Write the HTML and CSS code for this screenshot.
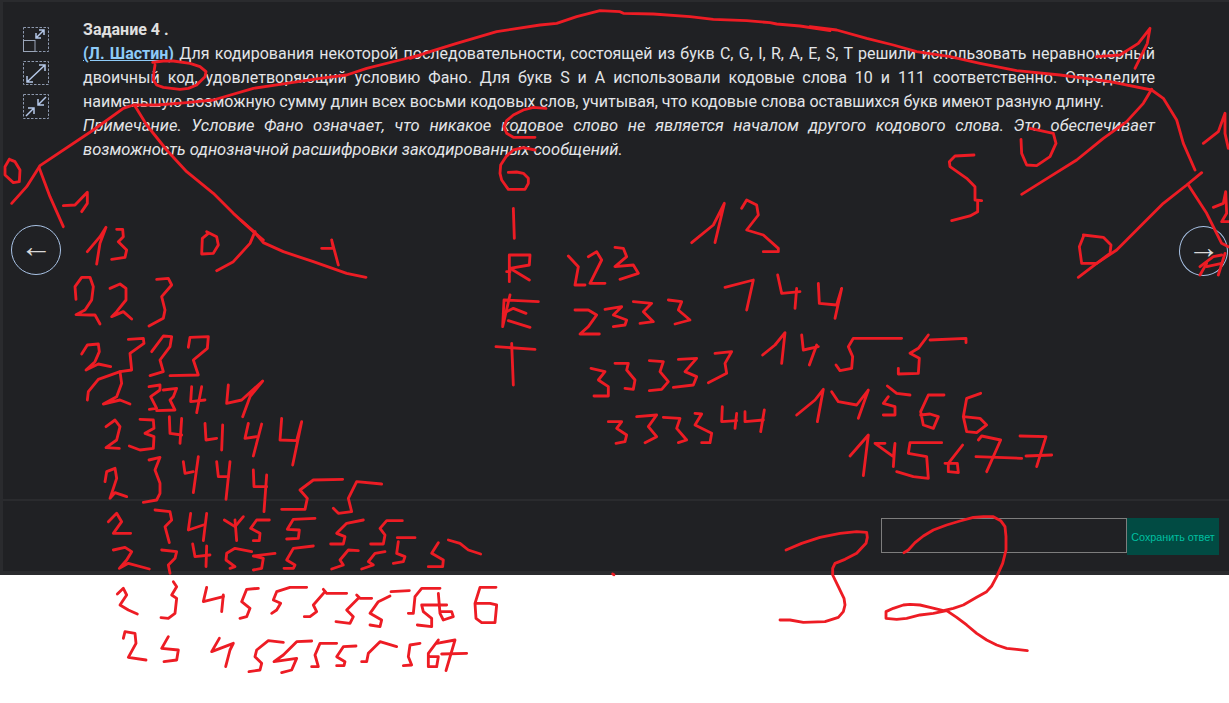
FILE: index.html
```html
<!DOCTYPE html>
<html lang="ru">
<head>
<meta charset="utf-8">
<title>Задание 4</title>
<link rel="stylesheet" href="styles.css">
</head>
<body>
<main class="panel">
  <section class="task">
    <nav class="tools">
      <button class="tool tool-first" aria-label="Свернуть">
        <svg viewBox="0 0 26 25" class="tool-icon"><rect class="dash" x=".5" y=".5" width="25" height="24"/><rect class="solid" x=".5" y="13.5" width="11.5" height="11"/><path class="arrow" d="M13 11 21 3M16 3h5v5M13 6v5h5"/></svg>
      </button>
      <button class="tool" aria-label="Развернуть">
        <svg viewBox="0 0 26 25" class="tool-icon"><rect class="dash" x=".5" y=".5" width="25" height="23"/><path class="arrow" d="M4 21 22 4M16 4h6v6M4 15v6h6"/></svg>
      </button>
      <button class="tool" aria-label="Уменьшить">
        <svg viewBox="0 0 26 25" class="tool-icon"><rect class="dash" x=".5" y=".5" width="25" height="24"/><path class="arrow" d="M3 22 11 14M5 14h6v6M23 3 15 11M15 5v6h6"/></svg>
      </button>
    </nav>
    <article class="text">
      <h1 class="title">Задание 4 .</h1>
      <p class="para"><a class="author" href="#">(Л. Шастин)</a> Для кодирования некоторой последовательности, состоящей из букв C, G, I, R, A, E, S, T решили использовать неравномерный двоичный код, удовлетворяющий условию Фано. Для букв S и A использовали кодовые слова 10 и 111 соответственно. Определите наименьшую возможную сумму длин всех восьми кодовых слов, учитывая, что кодовые слова оставшихся букв имеют разную длину.</p>
      <p class="para note">Примечание. Условие Фано означает, что никакое кодовое слово не является началом другого кодового слова. Это обеспечивает возможность однозначной расшифровки закодированных сообщений.</p>
    </article>
    <button class="nav-btn nav-prev" aria-label="Назад">←</button>
    <button class="nav-btn nav-next" aria-label="Вперёд">→</button>
  </section>
  <footer class="answer">
    <input class="answer-input" type="text" aria-label="Ответ">
    <button class="save">Сохранить ответ</button>
  </footer>
</main>

<svg class="ink" viewBox="0 0 1229 703" aria-hidden="true">
  <g transform="translate(0 0) scale(.33333)">
    <polyline points="1260,165 1200,180 1100,205 1040,225 960,235 860,250 760,265 640,300 560,308 470,315 400,315 370,325 280,390 120,497"/>
    <polyline points="458,187 490,183 520,183 570,190 600,200 618,215 615,230 590,255 565,265 540,268 490,262 470,255 460,240 462,215 465,195"/>
    <polyline points="405,318 440,375 500,450 560,515 640,580 700,640 760,695 790,720"/>
    <polyline points="118,500 80,560 35,610"/>
    <polyline points="118,505 150,590 190,680"/>
    <polyline points="28,478 15,500 15,525 40,548 58,545 60,510 45,485 28,478"/>
    <polyline points="190,617 225,615 262,577 262,610 245,635"/>
  </g>
  <g transform="translate(410 0) scale(.33333)">
    <polyline points="0,175 60,155 140,130 260,95 390,75 440,70 500,50 570,32 630,35 640,40 730,42 840,50 910,58 1010,62 1080,68 1100,72 1170,78 1260,92"/>
    <polyline points="408,325 370,322 340,330 310,345 290,362 282,380 290,400 310,412 375,412"/>
    <polyline points="375,450 340,443 310,450 288,470 272,495 270,520 275,540 295,568 345,568 355,550 355,535 340,520 320,516 295,517"/>
  </g>
  <g transform="translate(810 0) scale(.33333)">
    <polyline points="0,80 80,90 170,115 250,135 320,155 420,170 510,190 620,212 750,225 900,245 1025,270 1060,295 1100,360 1120,430 1155,510"/>
    <polyline points="860,170 930,165 985,130 1020,85 1012,130 975,205"/>
    <polyline points="1025,268 1000,310 950,365 880,415 800,480 720,530 635,583"/>
    <polyline points="660,385 730,400 738,430 720,470 680,497 650,495 635,460 633,418"/>
    <polyline points="492,465 435,468 418,485 420,500 470,535 495,560 495,600 515,602"/>
    <polyline points="503,605 503,635 480,648 425,662"/>
    <polyline points="1175,518 1130,555 1060,610 1000,670 920,750 860,790 805,832"/>
    <polyline points="1135,555 1190,640 1235,730 1255,740"/>
    <polyline points="820,710 808,740 815,790 860,790 900,760 903,735 880,712 820,705"/>
    <polyline points="1180,430 1225,395 1245,340 1245,400 1255,445"/>
    <polyline points="1210,622 1240,610 1247,575 1250,640 1235,665 1257,665"/>
    <polyline points="1170,800 1210,770 1235,765"/>
    <polyline points="1245,760 1225,825"/>
    <polyline points="1170,825 1190,790"/>
    <polyline points="1190,800 1235,790"/>
  </g>
  <g transform="translate(0 220) scale(.33333)">
    <polyline points="262,95 300,50 318,22 300,70 290,132"/>
    <polyline points="350,28 368,28 370,50 355,65 380,90 375,112 335,118"/>
    <polyline points="620,35 650,50 655,75 640,100 605,102 607,55 625,40"/>
    <polyline points="765,35 750,70 700,125 650,152"/>
    <polyline points="722,0 765,38 790,68 850,95 940,125 1040,160 1098,172"/>
    <polyline points="965,85 1000,85 995,60 1015,135"/>
    <polyline points="228,238 225,200 245,172 270,172 280,200 275,240 255,270 228,284 270,285 285,285 300,312"/>
    <polyline points="330,205 360,192 378,205 378,240 350,275 335,290 370,275 395,297"/>
    <polyline points="470,178 505,175 515,195 485,230 495,270 490,295 447,318"/>
    <polyline points="245,402 262,375 295,372 298,395 285,425 258,450 295,432 332,440"/>
    <polyline points="385,358 430,355 432,370 390,400 395,450 360,455"/>
    <polyline points="455,395 490,348 515,350 510,380 480,420 490,455 450,467"/>
    <polyline points="565,382 570,352 625,350 622,385 580,420 595,465 510,467"/>
    <polyline points="262,540 265,515 295,478 360,455 365,490 350,530 310,552 360,540 390,552"/>
    <polyline points="447,500 480,495 480,510 452,530 470,565 448,568"/>
    <polyline points="490,510 530,505 520,530 510,540 525,570 470,572"/>
    <polyline points="575,500 572,545 615,540"/>
    <polyline points="605,500 590,578"/>
    <polyline points="685,495 680,550 725,540 788,483 750,530 728,590"/>
    <polyline points="318,620 345,600 360,620 350,660 318,683 358,685"/>
    <polyline points="420,598 460,600 462,625 435,640 462,650 460,685 420,690 388,678"/>
    <polyline points="508,590 510,640 545,645"/>
    <polyline points="545,595 540,670"/>
    <polyline points="615,610 618,660 650,655"/>
    <polyline points="668,615 665,690"/>
    <polyline points="745,610 735,655 770,650"/>
    <polyline points="785,612 760,708"/>
    <polyline points="845,595 840,660 890,662 905,605 878,735"/>
  </g>
  <g transform="translate(60 470) scale(.33333)">
    <polyline points="135,35 140,5 165,-5 170,25 150,85 165,68 200,80"/>
    <polyline points="267,-30 300,-38 285,0 300,40 300,70 290,90 250,97"/>
    <polyline points="370,-25 375,10 400,5"/>
    <polyline points="415,-40 400,68"/>
    <polyline points="470,-25 475,20 505,20"/>
    <polyline points="510,-25 498,88"/>
    <polyline points="580,0 582,50 620,50"/>
    <polyline points="620,15 612,125"/>
    <polyline points="665,118 735,118 742,85 720,60 760,30 848,28"/>
    <polyline points="965,42 890,35 865,85 875,125 835,130 820,115"/>
    <polyline points="145,155 170,130 185,155 160,190 212,190"/>
    <polyline points="285,120 330,125 335,150 315,170 328,218"/>
    <polyline points="392,130 385,180 430,165"/>
    <polyline points="440,130 430,212"/>
    <polyline points="493,150 525,170 550,140"/>
    <polyline points="525,150 530,212"/>
    <polyline points="628,150 590,150 572,175 600,190 598,212 580,212"/>
    <polyline points="765,145 700,148 682,178 718,180 715,205 680,207"/>
    <polyline points="910,150 860,160 830,190 855,200 850,222 812,222"/>
    <polyline points="1027,152 980,152 960,175 975,195 970,222 932,222"/>
    <polyline points="1012,203 1065,203"/>
    <polyline points="160,240 195,232 215,245 200,270 178,295 205,280 268,297"/>
    <polyline points="305,240 350,245 345,265 325,285 330,310"/>
    <polyline points="398,222 405,260 450,255"/>
    <polyline points="440,228 438,290"/>
    <polyline points="575,245 525,235 500,250 498,270 525,290 510,295"/>
    <polyline points="645,250 580,258 610,265 605,295 580,300"/>
    <polyline points="760,228 700,235 680,270 705,285 700,295 672,295"/>
    <polyline points="895,242 865,240 840,270 850,285 815,297"/>
    <polyline points="975,245 945,250 925,275 940,285 905,297"/>
    <polyline points="1015,215 1010,250 1035,260 1030,275 1000,280"/>
    <polyline points="1135,218 1115,250 1150,270 1148,290 1105,290"/>
    <polyline points="1165,210 1200,220 1225,240 1262,252"/>
    <polyline points="172,372 190,355 200,375 180,405 205,420 232,432"/>
    <polyline points="340,335 350,350 335,375 350,385 345,430 325,445 303,443"/>
    <polyline points="440,352 430,395 490,380"/>
    <polyline points="490,375 485,425"/>
    <polyline points="595,355 560,358 545,395 570,415 560,440 540,445"/>
    <polyline points="740,352 690,352 650,365 640,390 662,400 650,420 635,430"/>
    <polyline points="860,370 800,370 790,358"/>
    <polyline points="795,365 760,405 770,425 750,440 733,440"/>
    <polyline points="935,385 900,385 890,375"/>
    <polyline points="895,385 860,420 880,440 870,460 828,455"/>
    <polyline points="990,378 955,395 930,430 965,450 960,470 930,465"/>
    <polyline points="993,365 1048,362"/>
    <polyline points="1140,355 1085,355 1065,380 1060,430 1045,430"/>
    <polyline points="1160,405 1085,405 1090,425 1115,445 1115,470 1072,465"/>
    <polyline points="1135,370 1140,430 1150,450 1180,440 1175,425 1145,425"/>
    <polyline points="1308,352 1260,352 1245,400 1248,445 1265,458 1305,458 1310,405 1290,400 1250,400"/>
    <polyline points="190,505 195,485 225,490 228,520 205,562 258,570"/>
    <polyline points="325,500 305,535 355,540 350,570 312,575"/>
    <polyline points="478,505 455,545 520,520 510,540 497,590"/>
    <polyline points="670,517 625,512 590,540 585,560 605,580 600,600 567,605"/>
    <polyline points="755,513 710,515 670,555 642,575 710,565 695,600 665,608"/>
    <polyline points="830,520 780,520 765,555 775,590 755,590"/>
    <polyline points="888,528 850,530 830,560 855,575 852,587 830,587"/>
    <polyline points="1010,530 960,515 925,550 920,575 905,575"/>
    <polyline points="1080,520 1050,525 1045,560 1055,585 1030,587"/>
    <polyline points="1135,510 1105,550 1105,590 1130,590 1135,560 1110,560"/>
    <polyline points="1130,520 1185,510 1158,602"/>
    <polyline points="1145,552 1220,550"/>
    <polyline points="1658,312 1662,314"/>
  </g>
  <g transform="translate(480 150) scale(.33333)">
    <polyline points="100,175 103,265"/>
    <polyline points="88,395 88,315 150,315 148,345 90,355 148,390"/>
    <polyline points="80,365 90,365"/>
    <polyline points="90,435 68,530 72,450 175,455"/>
    <polyline points="70,490 100,475 138,490"/>
    <polyline points="85,512 150,532"/>
    <polyline points="48,590 165,598"/>
    <polyline points="95,580 100,705"/>
    <polyline points="265,318 295,350 285,405 315,405"/>
    <polyline points="325,320 350,305 365,330 330,400 375,400"/>
    <polyline points="405,292 430,295 440,320 405,350 460,345 475,370 420,388"/>
    <polyline points="635,278 700,225 733,160 705,278"/>
    <polyline points="785,175 800,150 830,165 835,195 800,240 850,255 895,295 895,305 850,305"/>
    <polyline points="285,480 325,480 350,495 325,530 300,552 358,552"/>
    <polyline points="375,478 425,470 400,495 440,510 435,525 400,530"/>
    <polyline points="460,455 515,460 490,485 520,515 480,520"/>
    <polyline points="565,450 605,455 595,480 630,510 585,522"/>
    <polyline points="735,412 820,390 800,480"/>
    <polyline points="893,375 905,430 960,425"/>
    <polyline points="950,415 945,475"/>
    <polyline points="1015,400 1018,460 1070,465 1085,415 1065,505"/>
    <polyline points="333,655 375,665 355,690 385,710 385,738 342,738"/>
    <polyline points="405,640 445,640 440,660 465,690 460,718 435,715"/>
    <polyline points="508,632 550,635 540,665 565,695 545,718 508,722"/>
    <polyline points="595,628 650,625 615,665 650,680 640,705 580,712"/>
    <polyline points="705,610 755,605 735,640 740,670 685,698"/>
    <polyline points="385,815 425,815 410,835 440,855 435,875 408,880"/>
    <polyline points="470,800 530,795 505,830 530,860 495,878"/>
    <polyline points="550,802 600,805 590,835 620,870 595,878"/>
    <polyline points="645,790 665,792 645,825 695,850 690,878 665,878"/>
    <polyline points="727,770 725,815 770,812"/>
    <polyline points="770,790 765,835"/>
    <polyline points="795,785 795,815 850,810"/>
    <polyline points="853,780 842,845"/>
  </g>
  <g transform="translate(760 300) scale(.33333)">
    <polyline points="8,165 45,135 75,98 65,190"/>
    <polyline points="125,105 130,150 175,140"/>
    <polyline points="170,135 148,195"/>
    <polyline points="425,115 280,115 265,140 278,170 275,205 240,212 228,195"/>
    <polyline points="618,128 618,115 510,120"/>
    <polyline points="505,105 475,145 450,160 478,175 475,220 415,222 415,205"/>
    <polyline points="110,345 165,300 190,268 172,365"/>
    <polyline points="215,275 235,305 290,315 325,270 295,355"/>
    <polyline points="382,258 410,280 450,285"/>
    <polyline points="385,290 370,310 405,320 405,345 370,345"/>
    <polyline points="552,285 505,285 482,335 490,375 520,385 535,350 510,342 482,345"/>
    <polyline points="662,280 620,295 610,350 620,395 650,398 680,375 660,355 610,350"/>
    <polyline points="270,468 325,405 310,527"/>
    <polyline points="375,430 345,430 400,470 405,430 400,500"/>
    <polyline points="545,428 450,428 445,460 500,470 505,535 460,530 410,515"/>
    <polyline points="608,435 565,490 565,515 595,518 592,490 555,490"/>
    <polyline points="655,420 665,408 722,420 680,515"/>
    <polyline points="648,470 785,475"/>
    <polyline points="780,408 858,410 830,500"/>
    <polyline points="798,468 875,465"/>
    <polyline points="78,750 125,730 180,712 240,700 290,695 320,697 322,712 318,730 290,760 255,778 225,790 218,805 218,825 235,860 252,895 255,915 250,935 235,952 195,965 130,967 90,960 60,960"/>
    <polyline points="432,758 445,750 465,728 490,708 520,690 560,675 600,663 640,652 670,650 700,650 722,662 735,680 738,710 738,750 728,790 710,830 695,858 680,875 650,892 610,915 580,925 550,932 510,922 480,915 450,913 430,915 400,925 378,935 378,955 410,958 440,955 480,945 520,940 560,932 590,952 620,975 650,1000 680,1020 710,1035 740,1045 770,1048 802,1052"/>
  </g>
</svg>
</body>
</html>
```
FILE: styles.css
```css
* { box-sizing: border-box; }
html, body { margin: 0; padding: 0; }
body {
  height: 703px;
  overflow: hidden;
  background: #fff;
  font-family: Roboto, "Liberation Sans", sans-serif;
  position: relative;
}
.panel {
  height: 575px;
  display: flex;
  flex-direction: column;
  background: #202124;
  border-left: 3px solid #2a2b2e;
  border-top: 2px solid #2a2b2e;
  border-bottom: 4px solid #2a2b2e;
}
.task {
  flex: 0 0 499px;
  display: flex;
  align-items: flex-start;
  padding: 16px 74px 0 20px;
  border-bottom: 2px solid #2a2b2e;
}
.tools {
  flex: 0 0 60px;
  display: flex;
  flex-direction: column;
  gap: 8px;
  padding-top: 9px;
}
.tool {
  display: block;
  width: 26px;
  height: 25px;
  padding: 0;
  border: 0;
  background: none;
}
.tool-first { margin-bottom: 1px; }
.tool-icon { display: block; width: 26px; height: 25px; }
.dash { fill: none; stroke: #8d99ae; stroke-width: 1; stroke-dasharray: 2.5 1.5; }
.solid { fill: none; stroke: #9aa5b8; stroke-width: 1; }
.arrow { fill: none; stroke: #b4c7e7; stroke-width: 1.5; }
.text { flex: 1; min-width: 0; color: #e3e5e8; font-size: 16px; line-height: 24px; }
.title { margin: 0; font-size: 16px; line-height: 24px; font-weight: 700; color: #e0e0e0; }
.para { margin: 0; text-align: justify; }
.note { font-style: italic; font-size: 16.5px; }
.author { color: #8ecbf8; font-weight: 700; text-decoration: underline; }
.nav-btn {
  position: absolute;
  top: 225px;
  width: 50px;
  height: 50px;
  padding: 0 0 9px;
  border: 1px solid #a9c3e6;
  border-radius: 50%;
  background: transparent;
  color: #d8d8d8;
  font-family: "Liberation Sans", Arial, sans-serif;
  font-size: 32px;
  line-height: 1;
}
.nav-prev { left: 11px; }
.nav-next { left: 1179px; top: 226px; width: 49px; }
.answer {
  flex: 1;
  display: flex;
  justify-content: flex-end;
  align-items: flex-start;
  padding: 17px 10px 0 0;
}
.answer-input {
  width: 246px;
  height: 35px;
  border: 1px solid #7d7d7d;
  background: transparent;
  padding: 0;
}
.save {
  width: 92px;
  height: 37px;
  border: 0;
  padding: 0;
  background: #014b43;
  color: #00bfa0;
  font-family: "Liberation Sans", Arial, sans-serif;
  font-size: 10.8px;
  white-space: nowrap;
}
.ink {
  position: absolute;
  left: 0;
  top: 0;
  width: 1229px;
  height: 703px;
  pointer-events: none;
}
.ink polyline {
  fill: none;
  stroke: #ed1c24;
  stroke-width: 8.5;
  stroke-linejoin: round;
  stroke-linecap: round;
}
```
